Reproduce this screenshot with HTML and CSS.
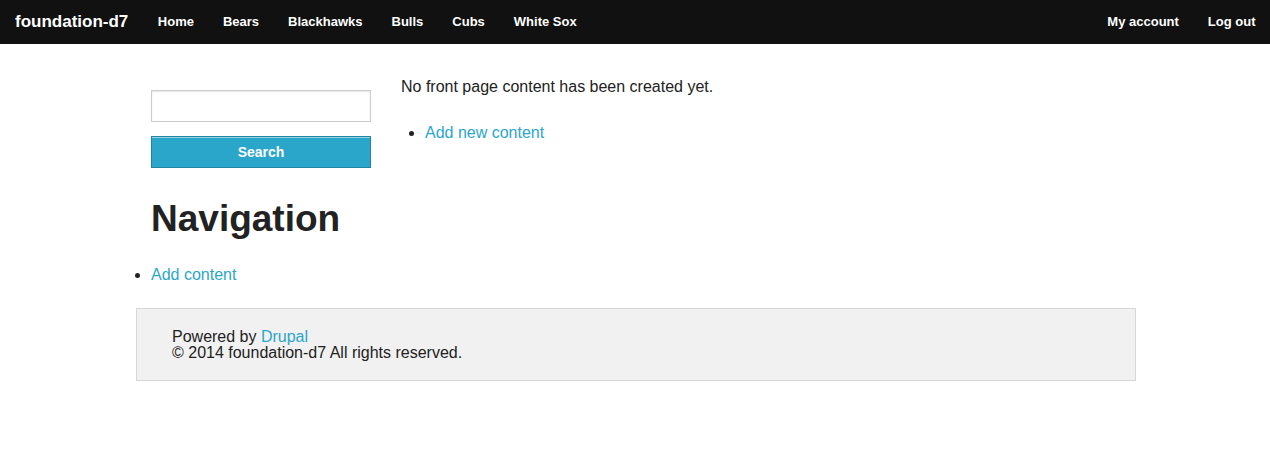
FILE: index.html
```html
<!DOCTYPE html>
<html>
<head>
<meta charset="utf-8">
<title>foundation-d7</title>
<link rel="stylesheet" href="styles.css">
</head>
<body>
<nav class="topbar">
  <div class="topbar-left">
    <a class="brand" href="#">foundation-d7</a>
    <ul class="menu">
      <li><a href="#">Home</a></li>
      <li><a href="#">Bears</a></li>
      <li><a href="#">Blackhawks</a></li>
      <li><a href="#">Bulls</a></li>
      <li><a href="#">Cubs</a></li>
      <li><a href="#">White Sox</a></li>
    </ul>
  </div>
  <ul class="menu menu-right">
    <li><a href="#">My account</a></li>
    <li><a href="#">Log out</a></li>
  </ul>
</nav>

<div class="page">
  <div class="row">
    <aside class="sidebar">
      <form class="search">
        <input class="search-input" type="text">
        <button class="search-button" type="button">Search</button>
      </form>
      <h2 class="block-title">Navigation</h2>
      <ul class="nav-list">
        <li><a href="#">Add content</a></li>
      </ul>
    </aside>
    <main class="content">
      <p class="empty">No front page content has been created yet.</p>
      <ul class="content-list">
        <li><a href="#">Add new content</a></li>
      </ul>
    </main>
  </div>
  <footer class="footer">
    <div>Powered by <a href="#">Drupal</a></div>
    <div>© 2014 foundation-d7 All rights reserved.</div>
  </footer>
</div>
</body>
</html>
```

FILE: styles.css
```css
* { box-sizing: border-box; }
html, body { margin: 0; padding: 0; }
body {
  font-family: "Liberation Sans", Arial, Helvetica, sans-serif;
  font-size: 16px;
  line-height: 1.6;
  color: #222;
  background: #fff;
}
a { color: #2ba6cb; text-decoration: none; }

.topbar {
  height: 44px;
  background: #111;
  display: flex;
  justify-content: space-between;
  align-items: center;
}
.topbar-left { display: flex; align-items: center; }
.brand {
  color: #fff;
  font-weight: bold;
  font-size: 17px;
  line-height: 44px;
  padding: 0 15px;
}
.menu {
  list-style: none;
  margin: 0;
  padding: 0;
  display: flex;
}
.menu a {
  display: block;
  color: #fff;
  font-weight: bold;
  font-size: 13px;
  line-height: 44px;
  padding: 0 14.5px;
}
.menu-right { padding-right: 0; }

.page {
  width: 1000px;
  margin: 0 134px 0 136px;
}
.row {
  display: grid;
  grid-template-columns: 250px 750px;
}
.sidebar { padding: 46px 15px 0; }
.content { padding: 30px 15px 0; }

.search-input {
  display: block;
  width: 220px;
  height: 32px;
  margin: 0;
  border: 1px solid #ccc;
  background: #fff;
  box-shadow: inset 0 1px 2px rgba(0,0,0,0.1);
}
.search-button {
  display: block;
  width: 220px;
  height: 32px;
  margin-top: 14px;
  background: #2ba6cb;
  border: 1px solid #2284a1;
  color: #fff;
  font-family: "Liberation Sans", Arial, sans-serif;
  font-weight: bold;
  font-size: 14px;
  padding: 0;
  box-shadow: inset 0 1px 0 rgba(255,255,255,0.5);
}
.block-title {
  font-size: 37px;
  line-height: 44px;
  font-weight: bold;
  color: #222;
  margin: 29px 0 21px;
}
.nav-list {
  margin: 0;
  padding: 0;
}
.empty { margin: 0 0 20px; }
.content-list {
  margin: 0;
  padding-left: 24px;
}
.footer {
  margin-top: 20px;
  background: #f1f1f1;
  border: 1px solid #d6d6d6;
  padding: 20px 35px 19px;
  line-height: 16px;
}
```
